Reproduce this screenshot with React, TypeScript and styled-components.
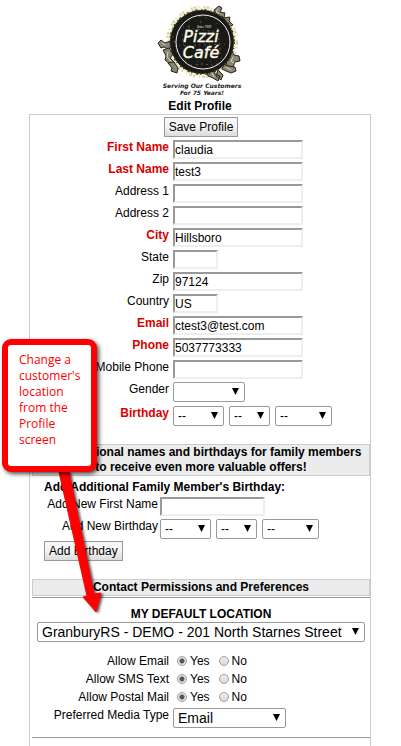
import React from "react";
import styled, { createGlobalStyle } from "styled-components";

const GlobalStyle = createGlobalStyle`
  *, *::before, *::after { box-sizing: border-box; }
  body {
    margin: 0;
    background: #fff;
    color: #000;
    font: 12px/15px "Liberation Sans", Arial, sans-serif;
  }
  input, select, button { font: inherit; color: inherit; margin: 0; }
`;

const Page = styled.main`
  position: relative;
  display: flex;
  flex-direction: column;
  min-height: 100vh;
  padding: 4px 30px 0 29px;
`;

const Header = styled.header`
  display: flex;
  flex-direction: column;
  align-items: center;
`;

const Logo = styled.svg`
  display: block;
  width: 90px;
  height: 94px;
`;

const Title = styled.h1`
  margin: 0;
  padding-top: 1px;
  font-size: 12px;
  line-height: 15px;
`;

const Panel = styled.form`
  display: flex;
  flex: 1;
  flex-direction: column;
  border: 1px solid #ccc;
  border-bottom: 0;
  padding: 2px 0 0 2px;
`;

const Button = styled.button`
  align-self: ${(p: { $center?: boolean }) => (p.$center ? "center" : "flex-start")};
  height: 20px;
  padding: 0 4px;
  line-height: 16px;
  border: 1px solid #999;
  background: linear-gradient(#f6f6f6 40%, #dcdcdc);
`;

const FieldGrid = styled.div<{ $label: number; $gap?: number }>`
  display: grid;
  grid-template-columns: ${(p) => p.$label}px 1fr;
  column-gap: ${(p) => p.$gap ?? 4}px;
  row-gap: 3px;
`;

const Label = styled.label<{ $required?: boolean }>`
  text-align: right;
  white-space: nowrap;
  color: ${(p) => (p.$required ? "#d90000" : "#000")};
  font-weight: ${(p) => (p.$required ? "bold" : "normal")};
`;

const TextInput = styled.input<{ $width: number }>`
  display: block;
  width: ${(p) => p.$width}px;
  height: 19px;
  padding: 1px 0 0;
  border: 2px solid;
  border-color: #999 #eee #eee #999;
  border-radius: 0;
  background: #fff;
`;

const SelectBox = styled.span<{ $width?: number; $large?: boolean }>`
  position: relative;
  display: block;
  width: ${(p) => (p.$width ? `${p.$width}px` : "auto")};
  font-size: ${(p) => (p.$large ? 14 : 12)}px;

  &::after {
    content: "";
    position: absolute;
    top: 6px;
    right: 6px;
    width: 7px;
    height: 7px;
    background: #000;
    clip-path: polygon(0 0, 100% 0, 50% 100%);
    pointer-events: none;
  }
`;

const NativeSelect = styled.select`
  appearance: none;
  display: block;
  width: 100%;
  height: 20px;
  padding: 0 16px 0 4px;
  border: 1px solid #999;
  border-radius: 2px;
  background: #fff;
  white-space: nowrap;
`;

const Row = styled.div`
  display: flex;
  gap: 5px;
`;

const Band = styled.h2`
  margin: 0;
  padding: 0 4px;
  border: 1px solid #ccc;
  background: #ececec;
  font-size: 12px;
  line-height: 15px;
  text-align: center;
`;

const Rule = styled.hr`
  width: 100%;
  margin: 1px 0 0;
  border: 0;
  border-top: 1px solid #999;
`;

const Fields = styled.div`
  padding-top: 3px;
`;

const BirthdayRow = styled.div`
  display: contents;
  & > * { margin-top: 1px; }
`;

const Family = styled.section`
  display: flex;
  flex-direction: column;
  gap: 2px;
  padding: 4px 12px 0;
`;

const Heading = styled.h3<{ $center?: boolean }>`
  margin: 0;
  font-size: 12px;
  line-height: 15px;
  text-align: ${(p) => (p.$center ? "center" : "left")};
`;

const BandSlot = styled.div`
  padding-top: 18px;
`;

const Location = styled.section`
  padding: 9px 5px 0;
`;

const Permissions = styled.div`
  padding: 10px 0 8px;
`;

const PermissionRow = styled.fieldset`
  display: grid;
  grid-template-columns: 137px 1fr;
  column-gap: 8px;
  height: 18px;
  align-items: center;
  margin: 0;
  padding: 0;
  border: 0;
`;

const MediaRow = styled.div`
  padding-top: 2px;
`;

const RowCaption = styled.span`
  text-align: right;
`;

const Choices = styled.span`
  display: flex;
  gap: 9px;
`;

const Choice = styled.label`
  display: flex;
  align-items: center;
  gap: 3px;
`;

const Radio = styled.input`
  appearance: none;
  width: 10px;
  height: 10px;
  border: 1px solid #a0a0a0;
  border-radius: 50%;
  background: linear-gradient(#eee, #d8d8d8);

  &:checked {
    background: radial-gradient(circle, #555 0 2px, #e4e4e4 3px);
  }
`;

const Callout = styled.aside`
  position: absolute;
  top: 339px;
  left: 2px;
  width: 95px;
  height: 133px;
  padding: 7px 6px 0 11px;
  border: 6px solid #fe0000;
  border-radius: 9px;
  background: #fff;
  box-shadow: 2px 2px 4px rgba(0, 0, 0, 0.7);
  color: #fe0000;
  font: 12px/16px "Open Sans", "Noto Sans", sans-serif;
`;

const Arrow = styled.svg`
  position: absolute;
  top: 460px;
  left: 50px;
  width: 65px;
  height: 160px;
  pointer-events: none;
  filter: drop-shadow(2px 1px 1px rgba(0, 0, 0, 0.6));
`;

type SelectProps = { id?: string; label?: string; options: string[]; width?: number; large?: boolean };

function Select({ id, label, options, width, large }: SelectProps) {
  return (
    <SelectBox $width={width} $large={large}>
      <NativeSelect id={id} aria-label={label}>
        {options.map((o) => <option key={o}>{o}</option>)}
      </NativeSelect>
    </SelectBox>
  );
}

function DateSelects({ id, name }: { id: string; name: string }) {
  return (
    <Row>
      <Select id={id} options={["--"]} width={51} />
      <Select label={`${name} day`} options={["--"]} width={41} />
      <Select label={`${name} year`} options={["--"]} width={57} />
    </Row>
  );
}

const fields = [
  { label: "First Name", value: "claudia", required: true },
  { label: "Last Name", value: "test3", required: true },
  { label: "Address 1", value: "" },
  { label: "Address 2", value: "" },
  { label: "City", value: "Hillsboro", required: true },
  { label: "State", value: "", short: true },
  { label: "Zip", value: "97124" },
  { label: "Country", value: "US", short: true },
  { label: "Email", value: "ctest3@test.com", required: true },
  { label: "Phone", value: "5037773333", required: true },
  { label: "Mobile Phone", value: "" },
];

function PizziLogo() {
  return (
    <Logo viewBox="0 0 90 94" role="img" aria-label="Pizzi Café">
      <circle cx="47" cy="38" r="34" fill="#f1ebc0" />
      <circle cx="47" cy="38" r="35" fill="none" stroke="#d8d2ac" strokeWidth="2" strokeDasharray="3 2 1 4 2 1" />
      <g fill="#8b8672" stroke="#26251f" strokeWidth="1" strokeLinejoin="round">
        <path d="M3 39l3-3 4 3 5-2 2 6-4 2-4-2-3 1z" />
        <path d="M8 46l6-2 4 6-3 4 5 5-5 1-5-4 1-4z" />
        <path d="M13 59l6-1 4 6-1 5-6-2 1-3z" />
        <path d="M59 6l5-4 3 2-2 4 5 1-1 5-6-2zM69 14l6-1-1 4 4 4-5 2-5-4z" />
        <path d="M76 46l3 5 5 1 1 5-5 1-2 5-6-1-1-5 4-3z" />
        <path d="M68 60l5 2 7 1 1 4-5 2-5-2-4-2z" />
        <path d="M52 67l6-1 2 4 5 2-2 5-5-3-5-2zM63 66l5 5-2 5-5-4z" />
      </g>
      <g fill="none" stroke="#ddd7b5" strokeWidth="1" strokeLinecap="round">
        <path d="M7 39l3 2M13 48l-1 5 4 4M78 53l-2 4 3 2M71 63l5 3M57 69l2 4M63 5l-2 3 4 2" />
      </g>
      <circle cx="47" cy="38" r="32" fill="#191916" />
      <circle cx="47" cy="38" r="32" fill="none" stroke="#3b382d" strokeWidth="2" strokeDasharray="2 4 1 2" />
      <circle cx="48" cy="38" r="27" fill="none" stroke="#f2f2ee" strokeWidth="1" />
      <g fill="none" stroke="#aaa89c" strokeWidth="1" opacity=".45" strokeDasharray="1 4 2 3">
        <path d="M28 23l33 5M27 30l4 30M62 19l4 36M36 61l27-1M24 42l46-2M34 16v10M44 12l3 12M42 57l8 4M18 32l4 16M55 57l5 9M36 10l16 4" />
      </g>
      <g fontStyle="italic" fill="#fffce9" textAnchor="middle">
        <text x="49" y="24" fontFamily="Open Sans, sans-serif" fontSize="3">Since 1939</text>
        <text fontFamily="DejaVu Sans, sans-serif" fontSize="16" stroke="#fffce9" strokeWidth=".4">
          <tspan x="46" y="38">Pizzi</tspan>
          <tspan x="46" y="54">Café</tspan>
        </text>
      </g>
      <g fontFamily="DejaVu Sans, sans-serif" fontStyle="italic" fontWeight="700" fontSize="6" fill="#222" textAnchor="middle">
        <text x="47" y="84">Serving Our Customers</text>
        <text x="47" y="91">For 75 Years!</text>
      </g>
    </Logo>
  );
}

export default function App() {
  return (
    <>
      <GlobalStyle />
      <Page>
        <Header>
          <PizziLogo />
          <Title>Edit Profile</Title>
        </Header>
        <Panel onSubmit={(e) => e.preventDefault()}>
          <Button $center type="submit">Save Profile</Button>
          <Fields>
            <FieldGrid $label={137}>
              {fields.map((f) => (
                <React.Fragment key={f.label}>
                  <Label $required={f.required} htmlFor={f.label}>{f.label}</Label>
                  <TextInput id={f.label} defaultValue={f.value} $width={f.short ? 45 : 130} />
                </React.Fragment>
              ))}
              <Label htmlFor="gender">Gender</Label>
              <Select id="gender" options={[""]} width={72} />
              <BirthdayRow>
                <Label $required htmlFor="birthday">Birthday</Label>
                <DateSelects id="birthday" name="Birthday" />
              </BirthdayRow>
            </FieldGrid>
          </Fields>
          <BandSlot>
            <Band>Add additional names and birthdays for family members to receive even more valuable offers!</Band>
          </BandSlot>
          <Family>
            <Heading>Add Additional Family Member's Birthday:</Heading>
            <FieldGrid $label={114} $gap={2}>
              <Label htmlFor="newName">Add New First Name</Label>
              <TextInput id="newName" $width={105} />
              <Label htmlFor="newBirthday">Add New Birthday</Label>
              <DateSelects id="newBirthday" name="New birthday" />
            </FieldGrid>
            <Button type="button">Add Birthday</Button>
          </Family>
          <BandSlot>
            <Band>Contact Permissions and Preferences</Band>
          </BandSlot>
          <Rule />
          <Location>
            <Heading $center>MY DEFAULT LOCATION</Heading>
            <Select large label="My default location" options={["GranburyRS - DEMO - 201 North Starnes Street"]} />
          </Location>
          <Permissions>
            {["Allow Email", "Allow SMS Text", "Allow Postal Mail"].map((name) => (
              <PermissionRow key={name} aria-label={name}>
                <RowCaption>{name}</RowCaption>
                <Choices>
                  <Choice><Radio type="radio" name={name} defaultChecked />Yes</Choice>
                  <Choice><Radio type="radio" name={name} />No</Choice>
                </Choices>
              </PermissionRow>
            ))}
            <MediaRow>
              <FieldGrid $label={137}>
                <Label htmlFor="media">Preferred Media Type</Label>
                <Select large id="media" options={["Email"]} width={113} />
              </FieldGrid>
            </MediaRow>
          </Permissions>
          <Rule />
        </Panel>
        <Arrow viewBox="0 0 65 160" aria-hidden="true">
          <path d="M9 12h10l25 122 7-1-5 19-13-15 4-1z" fill="#fe0000" stroke="#fe0000" strokeWidth="1" strokeLinejoin="round" />
        </Arrow>
        <Callout>Change a customer's location from the Profile screen</Callout>
      </Page>
    </>
  );
}
